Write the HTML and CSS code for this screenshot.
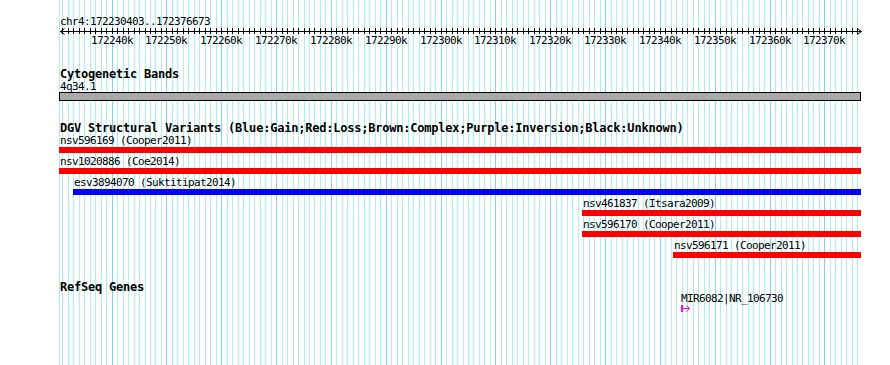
FILE: index.html
```html
<!DOCTYPE html>
<html lang="en">
<head>
    <meta charset="UTF-8">
    <title>chr4:172230403..172376673</title>
    <link rel="stylesheet" href="styles.css">
</head>
<body>
    <div class="panel">
        <div class="grid" id="grid"></div>

        <div class="content">
            <div class="pos">chr4:172230403..172376673</div>
            <svg class="ruler" id="ruler" width="890" height="9"></svg>
            <div class="tick-labels" id="tick-labels"></div>

            <section class="track cyto">
                <div class="track-title">Cytogenetic Bands</div>
                <div class="label">4q34.1</div>
                <div class="band"></div>
            </section>

            <section class="track dgv">
                <div class="track-title">DGV Structural Variants (Blue:Gain;Red:Loss;Brown:Complex;Purple:Inversion;Black:Unknown)</div>
                <div class="feature-list">
                    <div class="feature">
                        <div class="label">nsv596169 (Cooper2011)</div>
                        <div class="bar loss"></div>
                    </div>
                    <div class="feature">
                        <div class="label">nsv1020886 (Coe2014)</div>
                        <div class="bar loss"></div>
                    </div>
                    <div class="feature" style="margin-left: 14px">
                        <div class="label">esv3894070 (Suktitipat2014)</div>
                        <div class="bar gain"></div>
                    </div>
                    <div class="feature" style="margin-left: 523px">
                        <div class="label">nsv461837 (Itsara2009)</div>
                        <div class="bar loss"></div>
                    </div>
                    <div class="feature" style="margin-left: 523px">
                        <div class="label">nsv596170 (Cooper2011)</div>
                        <div class="bar loss"></div>
                    </div>
                    <div class="feature" style="margin-left: 614px">
                        <div class="label">nsv596171 (Cooper2011)</div>
                        <div class="bar loss"></div>
                    </div>
                </div>
            </section>

            <section class="track refseq">
                <div class="track-title">RefSeq Genes</div>
                <div class="gene">
                    <div class="gene-label">MIR6082|NR_106730</div>
                    <svg class="gene-glyph" width="10" height="7">
                        <rect x="0" y="0" width="2" height="7" fill="#ff00ff"/>
                        <rect x="2" y="3" width="6" height="1" fill="#ff00ff"/>
                        <polyline points="5.5,0.5 8.5,3.5 5.5,6.5" fill="none" stroke="#ff00ff" stroke-width="1"/>
                    </svg>
                </div>
            </section>
        </div>
    </div>

    <script>
        const start = 172230403;
        const end = 172376673;
        const left = 59;
        const width = 802;
        const scale = width / (end - start);

        function toX(bp) {
            return Math.round(left + (bp - start) * scale);
        }

        const grid = document.getElementById("grid");
        const ruler = document.getElementById("ruler");
        const tickLabels = document.getElementById("tick-labels");
        const svgNS = "http://www.w3.org/2000/svg";

        let edge = document.createElement("div");
        edge.className = "grid-line";
        edge.style.left = left + "px";
        grid.appendChild(edge);

        let rulerHtml = `<rect x="60" y="4" width="801" height="1" fill="#000"/>`;
        rulerHtml += `<polyline points="64.5,1.5 60.5,4.5 64.5,7.5" fill="none" stroke="#000"/>`;
        rulerHtml += `<polyline points="857.5,1.5 861.5,4.5 857.5,7.5" fill="none" stroke="#000"/>`;

        for (let kb = Math.ceil(start / 1000); kb * 1000 <= end; kb++) {
            let x = toX(kb * 1000);
            let major = kb % 10 === 0;

            let line = document.createElement("div");
            line.className = major ? "grid-line major" : "grid-line";
            line.style.left = x + "px";
            grid.appendChild(line);

            rulerHtml += `<rect x="${x}" y="1" width="1" height="6" fill="#000"/>`;

            if (major) {
                let label = document.createElement("span");
                label.className = "tick-label";
                label.style.left = (x - 21) + "px";
                label.innerText = kb + "k";
                tickLabels.appendChild(label);
            }
        }

        ruler.innerHTML = rulerHtml;
    </script>
</body>
</html>
```

FILE: styles.css
```css
body {
    margin: 0;
    background: #fff;
}
.panel {
    position: relative;
    width: 890px;
    height: 365px;
    overflow: hidden;
    font-family: "DejaVu Sans Mono", monospace;
    font-size: 11px;
    line-height: 11px;
    letter-spacing: -0.62px;
    color: #000;
}
.grid {
    position: absolute;
    top: 0;
    left: 0;
    right: 0;
    bottom: 0;
}
.grid-line {
    position: absolute;
    top: 0;
    bottom: 0;
    width: 1px;
    background: #afeeee;
}
.grid-line.major {
    background: #87cefa;
}
.content {
    position: relative;
    padding-top: 16px;
}
.pos {
    margin-left: 60px;
    height: 11px;
}
.ruler {
    display: block;
}
.tick-labels {
    position: relative;
    height: 11px;
    margin-top: -1px;
}
.tick-label {
    position: absolute;
    top: 0;
    width: 42px;
    text-align: center;
    white-space: nowrap;
}
.track {
    margin-left: 59px;
    width: 802px;
}
.track-title {
    font-weight: bold;
    font-size: 12px;
    line-height: 12px;
    letter-spacing: -0.22px;
    padding-left: 1px;
    white-space: nowrap;
}
.label {
    height: 11px;
    padding-left: 1px;
    white-space: nowrap;
}
.cyto {
    margin-top: 22px;
}
.cyto .label {
    margin-top: 1px;
}
.band {
    box-sizing: border-box;
    height: 9px;
    border: 1px solid #000;
    background: #aaaaaa;
}
.dgv {
    margin-top: 21px;
}
.feature-list {
    margin-top: 1px;
}
.feature {
    height: 21px;
}
.bar {
    height: 6px;
    margin-top: 1px;
}
.bar.loss {
    background: #ff0000;
}
.bar.gain {
    background: #0000ff;
}
.refseq {
    margin-top: 20px;
}
.gene {
    margin-left: 622px;
}
.gene-label {
    height: 11px;
    white-space: nowrap;
}
.gene-glyph {
    display: block;
    margin-top: 1px;
}
```
